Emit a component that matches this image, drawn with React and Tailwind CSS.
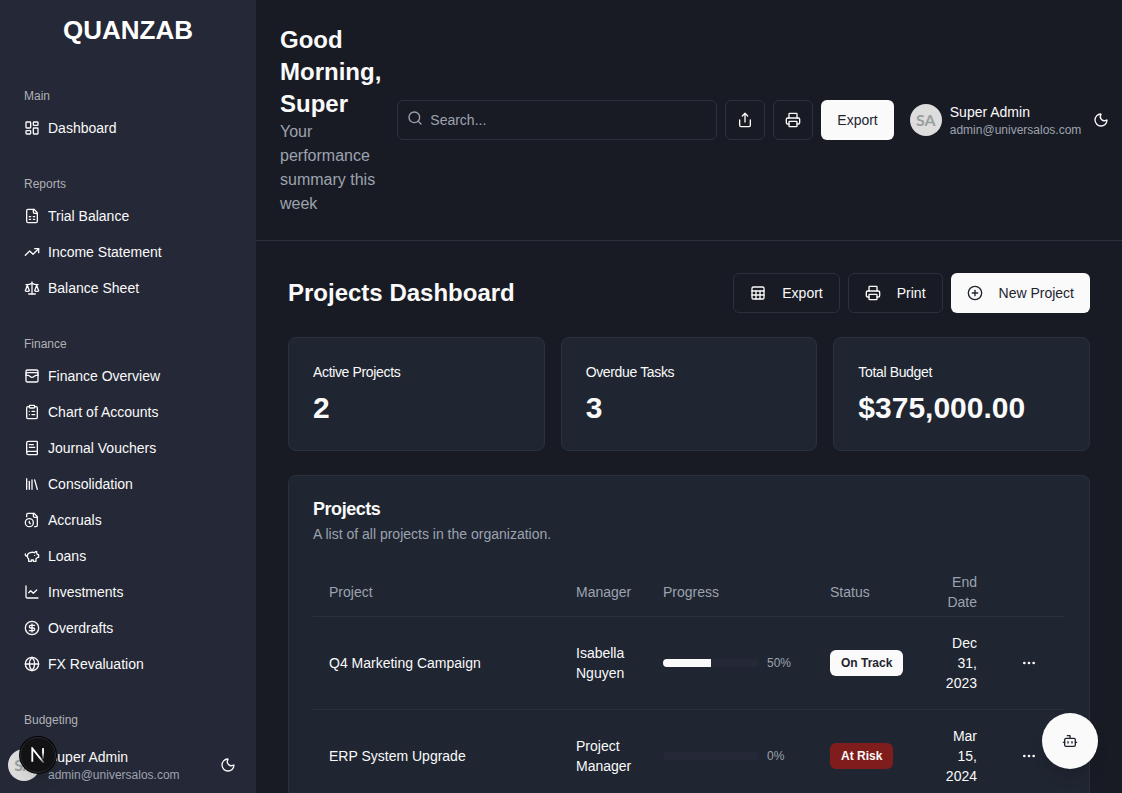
import {
  LayoutDashboard, TrendingUp, Scale, WalletCards, ClipboardList, BookText, Library,
  ChartLine, CircleDollarSign, Globe, Moon, Search, Share, Printer, Sheet,
  CirclePlus, Ellipsis, Bot,
} from "lucide-react";

function StrokeIcon({ size = 16, children }) {
  return (
    <svg
      width={size}
      height={size}
      viewBox="0 0 24 24"
      fill="none"
      stroke="currentColor"
      strokeWidth="2"
      strokeLinecap="round"
      strokeLinejoin="round"
      aria-hidden="true"
    >
      {children}
    </svg>
  );
}

function FileSheetIcon({ size }) {
  return (
    <StrokeIcon size={size}>
      <path d="M15 2H6a2 2 0 0 0-2 2v16a2 2 0 0 0 2 2h12a2 2 0 0 0 2-2V7Z" />
      <path d="M14 2v4a2 2 0 0 0 2 2h4" />
      <path d="M8 13h2M14 13h2M8 17h2M14 17h2" />
    </StrokeIcon>
  );
}

function FileClockIcon({ size }) {
  return (
    <StrokeIcon size={size}>
      <path d="M16 22h2a2 2 0 0 0 2-2V7l-5-5H6a2 2 0 0 0-2 2v3" />
      <path d="M14 2v4a2 2 0 0 0 2 2h4" />
      <circle cx="8" cy="16" r="6" />
      <path d="M9.5 17.5 8 16.25V14" />
    </StrokeIcon>
  );
}

function PiggyIcon({ size }) {
  return (
    <StrokeIcon size={size}>
      <path d="M19 5c-1.5 0-2.8 1.4-3 2-3.5-1.5-11-.3-11 5 0 1.8 0 3 2 4.5V20h4v-2h3v2h4v-4c1-.5 1.7-1 2-2h2v-4h-2c0-1-.5-1.5-1-2V5z" />
      <path d="M2 9v1c0 1.1.9 2 2 2h1" />
      <path d="M16 11h.01" />
    </StrokeIcon>
  );
}

const NAV = [
  { label: "Main", items: [["Dashboard", LayoutDashboard]] },
  {
    label: "Reports",
    items: [["Trial Balance", FileSheetIcon], ["Income Statement", TrendingUp], ["Balance Sheet", Scale]],
  },
  {
    label: "Finance",
    items: [
      ["Finance Overview", WalletCards],
      ["Chart of Accounts", ClipboardList],
      ["Journal Vouchers", BookText],
      ["Consolidation", Library],
      ["Accruals", FileClockIcon],
      ["Loans", PiggyIcon],
      ["Investments", ChartLine],
      ["Overdrafts", CircleDollarSign],
      ["FX Revaluation", Globe],
    ],
  },
  { label: "Budgeting", items: [] },
];

const STATS = [
  ["Active Projects", "2"],
  ["Overdue Tasks", "3"],
  ["Total Budget", "$375,000.00"],
];

const PROJECTS = [
  { name: "Q4 Marketing Campaign", manager: "Isabella Nguyen", progress: 50, status: "On Track", end: "Dec 31, 2023" },
  { name: "ERP System Upgrade", manager: "Project Manager", progress: 0, status: "At Risk", end: "Mar 15, 2024" },
];

const BUTTON = "flex h-10 shrink-0 items-center justify-center rounded-md text-sm";
const OUTLINE = "border border-[#2b303e] text-[#fafafa]";
const SOLID = "bg-[#fafafa] px-4 text-[#1f2430]";

function UserInfo() {
  return (
    <div className="flex items-center gap-2">
      <div className="flex size-8 shrink-0 items-center justify-center rounded-full bg-[#dddddd] font-[Lato,sans-serif] text-base font-bold text-[#999f9c]">
        SA
      </div>
      <div className="flex flex-col">
        <span className="text-sm whitespace-nowrap text-[#fafafa]">Super Admin</span>
        <span className="text-xs text-[#9ca3af]">admin@universalos.com</span>
      </div>
    </div>
  );
}

function ThemeButton() {
  return (
    <button type="button" aria-label="Toggle theme" className="flex size-10 shrink-0 items-center justify-center rounded-md text-[#fafafa]">
      <Moon size={16} />
    </button>
  );
}

function Sidebar() {
  return (
    <aside className="flex w-64 shrink-0 flex-col bg-[#252836]">
      <div className="flex h-15 shrink-0 items-center justify-center text-[26px] font-bold text-white">QUANZAB</div>
      <nav className="flex min-h-0 flex-1 flex-col gap-6 overflow-hidden px-4 pt-5">
        {NAV.map(({ label, items }) => (
          <section key={label}>
            <h2 className="flex h-8 items-center px-2 text-xs text-[#b0b1b6]">{label}</h2>
            <ul className="flex flex-col gap-1">
              {items.map(([name, Icon]) => (
                <li key={name}>
                  <a href="#" className="flex h-8 items-center gap-2 px-2 text-sm text-[#fafafa]">
                    <Icon size={16} />
                    {name}
                  </a>
                </li>
              ))}
            </ul>
          </section>
        ))}
      </nav>
      <div className="flex shrink-0 items-center justify-between p-2">
        <UserInfo />
        <ThemeButton />
      </div>
    </aside>
  );
}

function Header() {
  return (
    <header className="flex items-center gap-4 border-b border-[#2b303e] p-6">
      <div className="flex-1">
        <h1 className="text-2xl font-bold text-[#fafafa]">Good Morning, Super</h1>
        <p className="text-base text-[#9ca3af]">Your performance summary this week</p>
      </div>
      <div className="flex shrink-0 items-center gap-2">
        <div className="relative">
          <Search size={16} className="absolute top-2.5 left-2.5 text-[#9ca3af]" />
          <input
            type="search"
            aria-label="Search"
            placeholder="Search..."
            className="block h-10 w-80 rounded-md border border-[#2b303e] bg-transparent pr-3 pl-8 text-sm text-[#fafafa] placeholder:text-[#9ca3af]"
          />
        </div>
        <button type="button" aria-label="Share" className={`${BUTTON} ${OUTLINE} w-10`}><Share size={16} /></button>
        <button type="button" aria-label="Print" className={`${BUTTON} ${OUTLINE} w-10`}><Printer size={16} /></button>
        <button type="button" className={`${BUTTON} ${SOLID}`}>Export</button>
      </div>
      <div className="flex shrink-0 items-center">
        <UserInfo />
        <ThemeButton />
      </div>
    </header>
  );
}

function ProjectsTable() {
  return (
    <table className="w-full table-fixed text-sm">
      <colgroup>
        <col />
        <col className="w-[87px]" />
        <col className="w-[167px]" />
        <col className="w-[115px]" />
        <col className="w-16" />
        <col className="w-18" />
      </colgroup>
      <thead>
        <tr className="h-12 border-b border-[#2b303e] text-left text-[#9ca3af]">
          <th className="px-4 font-normal">Project</th>
          <th className="pl-4 font-normal">Manager</th>
          <th className="px-4 font-normal">Progress</th>
          <th className="px-4 font-normal">Status</th>
          <th className="px-4 text-right font-normal">End Date</th>
          <th aria-label="Actions" />
        </tr>
      </thead>
      <tbody>
        {PROJECTS.map((p) => (
          <tr key={p.name} className="border-b border-[#2b303e] text-[#fafafa]">
            <td className="p-4">{p.name}</td>
            <td className="py-4 pl-4">{p.manager}</td>
            <td className="p-4">
              <div className="flex items-center gap-2">
                <div className="h-2 w-24 overflow-hidden rounded-full bg-[#252836]">
                  <div className="h-full bg-[#fafafa]" style={{ width: `${p.progress}%` }} />
                </div>
                <span className="text-xs text-[#9ca3af]">{p.progress}%</span>
              </div>
            </td>
            <td className="p-4">
              <span
                className={`inline-flex rounded-md border border-transparent px-2.5 py-1 text-xs font-semibold whitespace-nowrap ${
                  p.status === "At Risk" ? "bg-[#7f1d1d] text-[#fafafa]" : "bg-[#fafafa] text-[#1f2430]"
                }`}
              >
                {p.status}
              </span>
            </td>
            <td className="p-4 text-right">{p.end}</td>
            <td className="px-4">
              <button type="button" aria-label={`Actions for ${p.name}`} className="flex size-10 items-center justify-center">
                <Ellipsis size={16} />
              </button>
            </td>
          </tr>
        ))}
      </tbody>
    </table>
  );
}

export default function App() {
  return (
    <div className="flex h-screen overflow-hidden bg-[#191b24] font-['Liberation_Sans',Arial,sans-serif]">
      <Sidebar />
      <div className="min-w-0 flex-1 overflow-hidden">
        <Header />
        <main className="flex flex-col gap-6 p-8">
          <div className="flex items-center justify-between">
            <h2 className="text-2xl font-bold text-[#fafafa]">Projects Dashboard</h2>
            <div className="flex gap-2">
              <button type="button" className={`${BUTTON} ${OUTLINE} gap-4 px-4`}><Sheet size={16} />Export</button>
              <button type="button" className={`${BUTTON} ${OUTLINE} gap-4 px-4`}><Printer size={16} />Print</button>
              <button type="button" className={`${BUTTON} ${SOLID} gap-4`}><CirclePlus size={16} />New Project</button>
            </div>
          </div>
          <div className="grid grid-cols-3 gap-4">
            {STATS.map(([label, value]) => (
              <div key={label} className="flex flex-col gap-2 rounded-lg border border-[#2b303e] bg-[#1f2531] p-6 text-[#fafafa]">
                <h3 className="text-sm tracking-tight">{label}</h3>
                <p className="text-3xl font-bold">{value}</p>
              </div>
            ))}
          </div>
          <section className="rounded-lg border border-[#2b303e] bg-[#1f2531] p-6">
            <div className="flex flex-col gap-1.5 pb-6">
              <h3 className="text-lg leading-none font-semibold tracking-tight text-[#fafafa]">Projects</h3>
              <p className="text-sm text-[#9ca3af]">A list of all projects in the organization.</p>
            </div>
            <ProjectsTable />
          </section>
        </main>
      </div>
      <button
        type="button"
        aria-label="Open assistant"
        className="fixed right-6 bottom-6 flex size-14 items-center justify-center rounded-full bg-[#fafafa] text-[#1f2430] shadow-lg"
      >
        <Bot size={16} />
      </button>
      <button
        type="button"
        aria-label="Open developer tools"
        className="fixed bottom-5 left-5 flex size-9 items-center justify-center rounded-full border border-[#2c2d33] bg-[#121214] shadow-lg ring-1 ring-black"
      >
        <svg width="16" height="16" viewBox="0 0 14 14" fill="none">
          <defs>
            <linearGradient id="stem" x1="0" y1="0" x2="0" y2="1">
              <stop offset="0.4" stopColor="#fff" />
              <stop offset="1" stopColor="#fff" stopOpacity="0.1" />
            </linearGradient>
            <linearGradient id="diag" gradientUnits="userSpaceOnUse" x1="2" y1="1" x2="13" y2="14">
              <stop offset="0.65" stopColor="#fff" />
              <stop offset="1" stopColor="#fff" stopOpacity="0.1" />
            </linearGradient>
          </defs>
          <path d="M2 13V1.2L12.2 14" stroke="url(#diag)" strokeWidth="1.6" />
          <rect x="10.6" y="1" width="1.6" height="9.5" fill="url(#stem)" />
        </svg>
      </button>
    </div>
  );
}
